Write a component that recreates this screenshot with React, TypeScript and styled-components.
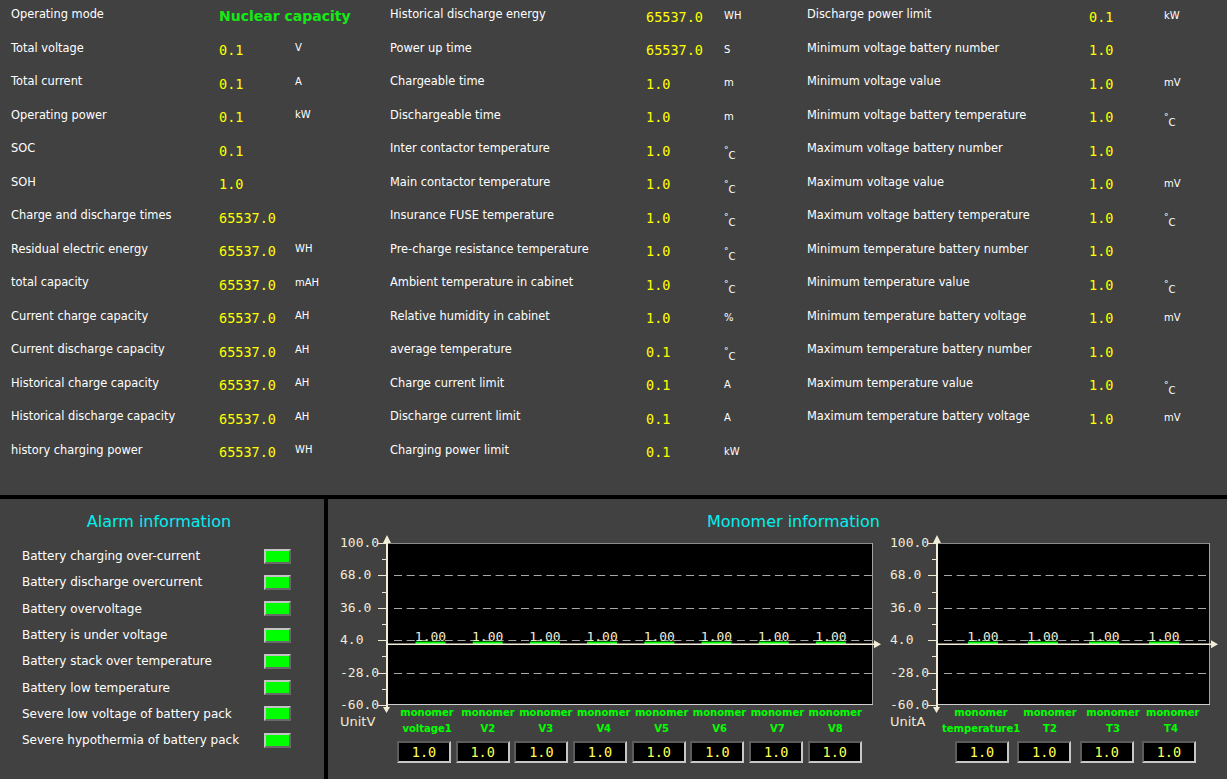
import React from 'react';
import styled, { createGlobalStyle } from 'styled-components';

const GlobalStyle = createGlobalStyle`
  html, body { margin: 0; padding: 0; background: #000; }
  body { font-family: "DejaVu Sans", sans-serif; }
  * { box-sizing: border-box; }
`;

const PANEL = '#414141';
const CREAM = '#f0ecd6';

type Item = { label: string; value: string; unit?: string; accent?: boolean };

const col1: Item[] = [
  { label: 'Operating mode', value: 'Nuclear capacity', accent: true },
  { label: 'Total voltage', value: '0.1', unit: 'V' },
  { label: 'Total current', value: '0.1', unit: 'A' },
  { label: 'Operating power', value: '0.1', unit: 'kW' },
  { label: 'SOC', value: '0.1' },
  { label: 'SOH', value: '1.0' },
  { label: 'Charge and discharge times', value: '65537.0' },
  { label: 'Residual electric energy', value: '65537.0', unit: 'WH' },
  { label: 'total capacity', value: '65537.0', unit: 'mAH' },
  { label: 'Current charge capacity', value: '65537.0', unit: 'AH' },
  { label: 'Current discharge capacity', value: '65537.0', unit: 'AH' },
  { label: 'Historical charge capacity', value: '65537.0', unit: 'AH' },
  { label: 'Historical discharge capacity', value: '65537.0', unit: 'AH' },
  { label: 'history charging power', value: '65537.0', unit: 'WH' },
];

const col2: Item[] = [
  { label: 'Historical discharge energy', value: '65537.0', unit: 'WH' },
  { label: 'Power up time', value: '65537.0', unit: 'S' },
  { label: 'Chargeable time', value: '1.0', unit: 'm' },
  { label: 'Dischargeable time', value: '1.0', unit: 'm' },
  { label: 'Inter contactor temperature', value: '1.0', unit: '°C' },
  { label: 'Main contactor temperature', value: '1.0', unit: '°C' },
  { label: 'Insurance FUSE temperature', value: '1.0', unit: '°C' },
  { label: 'Pre-charge resistance temperature', value: '1.0', unit: '°C' },
  { label: 'Ambient temperature in cabinet', value: '1.0', unit: '°C' },
  { label: 'Relative humidity in cabinet', value: '1.0', unit: '%' },
  { label: 'average temperature', value: '0.1', unit: '°C' },
  { label: 'Charge current limit', value: '0.1', unit: 'A' },
  { label: 'Discharge current limit', value: '0.1', unit: 'A' },
  { label: 'Charging power limit', value: '0.1', unit: 'kW' },
];

const col3: Item[] = [
  { label: 'Discharge power limit', value: '0.1', unit: 'kW' },
  { label: 'Minimum voltage battery number', value: '1.0' },
  { label: 'Minimum voltage value', value: '1.0', unit: 'mV' },
  { label: 'Minimum voltage battery temperature', value: '1.0', unit: '°C' },
  { label: 'Maximum voltage battery number', value: '1.0' },
  { label: 'Maximum voltage value', value: '1.0', unit: 'mV' },
  { label: 'Maximum voltage battery temperature', value: '1.0', unit: '°C' },
  { label: 'Minimum temperature battery number', value: '1.0' },
  { label: 'Minimum temperature value', value: '1.0', unit: '°C' },
  { label: 'Minimum temperature battery voltage', value: '1.0', unit: 'mV' },
  { label: 'Maximum temperature battery number', value: '1.0' },
  { label: 'Maximum temperature value', value: '1.0', unit: '°C' },
  { label: 'Maximum temperature battery voltage', value: '1.0', unit: 'mV' },
];

const alarms = [
  'Battery charging over-current',
  'Battery discharge overcurrent',
  'Battery overvoltage',
  'Battery is under voltage',
  'Battery stack over temperature',
  'Battery low temperature',
  'Severe low voltage of battery pack',
  'Severe hypothermia of battery pack',
];

/* ---------- layout ---------- */

const Screen = styled.div`
  width: 1227px;
  height: 779px;
  display: grid;
  grid-template-rows: 495px 1fr;
  row-gap: 4px;
  background: #000;
  overflow: hidden;
`;

const TopPanel = styled.section`
  background: ${PANEL};
  display: grid;
  grid-template-columns: 390px 417px 1fr;
`;

const Column = styled.div<{ $pad: number }>`
  display: flex;
  flex-direction: column;
  padding-left: ${(p) => p.$pad}px;
`;

const Row = styled.div<{ $template: string }>`
  display: grid;
  grid-template-columns: ${(p) => p.$template};
  height: 33.5px;
  align-items: start;
`;

const Label = styled.span`
  font: 11.4px/14px "DejaVu Sans", sans-serif;
  color: #ffffff;
  padding-top: 7px;
  white-space: nowrap;
`;

const Value = styled.span<{ $accent?: boolean }>`
  white-space: nowrap;
  color: ${(p) => (p.$accent ? '#14ea14' : '#ffff00')};
  font: ${(p) =>
    p.$accent
      ? 'bold 14px/16px "DejaVu Sans", sans-serif'
      : '13.5px/16px "DejaVu Sans Mono", monospace'};
  padding-top: ${(p) => (p.$accent ? 8 : 8.5)}px;
`;

const UnitText = styled.span<{ $top: number }>`
  font: 10px/12px "DejaVu Sans", sans-serif;
  color: #ffffff;
  padding-top: ${(p) => p.$top}px;
  white-space: nowrap;
`;

const Deg = styled.span`
  vertical-align: 2px;
  font-size: 9px;
`;

const DegC = styled.span`
  vertical-align: -4px;
`;

const Bottom = styled.div`
  display: grid;
  grid-template-columns: 324px 1fr;
  column-gap: 4px;
`;

const Panel = styled.section<{ $padLeft: number }>`
  background: ${PANEL};
  padding: 13px 0 0 ${(p) => p.$padLeft}px;
  display: flex;
  flex-direction: column;
`;

const PanelTitle = styled.h2<{ $shift: number }>`
  margin: 0;
  font: 16px/20px "DejaVu Sans", sans-serif;
  font-weight: normal;
  color: #00f0f0;
  text-align: center;
  padding-left: ${(p) => Math.max(p.$shift, 0)}px;
  padding-right: ${(p) => Math.max(-p.$shift, 0)}px;
`;

const AlarmList = styled.ul`
  list-style: none;
  margin: 11px 0 0;
  padding: 0 0 0 22px;
`;

const AlarmRow = styled.li`
  display: grid;
  grid-template-columns: 242px 27px;
  height: 26.3px;
  align-items: center;
`;

const AlarmLabel = styled.span`
  font: 12px/14px "DejaVu Sans", sans-serif;
  color: #ffffff;
  white-space: nowrap;
`;

const Led = styled.span`
  display: block;
  width: 27px;
  height: 15px;
  background: #00ff00;
  border: 2px solid;
  border-color: #c4c4c4 #6a6a6a #6a6a6a #c4c4c4;
`;

const ChartsRow = styled.div`
  display: flex;
  margin-top: 1px;
`;

const ChartGroup = styled.div<{ $w: number }>`
  width: ${(p) => p.$w}px;
  display: flex;
  flex-direction: column;
`;

const ChartSvg = styled.svg`
  display: block;
  overflow: visible;
`;

const LabelGrid = styled.div<{ $template: string }>`
  display: grid;
  grid-template-columns: ${(p) => p.$template};
  height: 32px;
  align-items: center;
`;

const UnitCaption = styled.span<{ $pad: number }>`
  font: 13px/16px "DejaVu Sans", sans-serif;
  color: ${CREAM};
  padding-left: ${(p) => p.$pad}px;
  padding-top: 2px;
`;

const ChannelName = styled.span`
  font: bold 10px/16px "DejaVu Sans", sans-serif;
  color: #00ff00;
  text-align: center;
  white-space: nowrap;
`;

const BoxRow = styled.div<{ $lead: number; $gap: number }>`
  display: flex;
  gap: ${(p) => p.$gap}px;
  padding-left: ${(p) => p.$lead}px;
  margin-top: 4px;
`;

const ValueBox = styled.div`
  width: 54px;
  height: 22px;
  flex: none;
  background: #000;
  border: 2px solid;
  border-color: #5c5c5c #c8c8c8 #c8c8c8 #5c5c5c;
  color: #ffff55;
  font: 13.5px/18px "DejaVu Sans Mono", monospace;
  display: flex;
  align-items: center;
  justify-content: center;
`;

/* ---------- chart drawing ---------- */

const TICKS = [100, 68, 36, 4, -28, -60];
const MINOR = [84, 52, 20, -12, -44];
const DASHED = [68, 36, 4, -28];
const yOf = (v: number) => 10 + ((100 - v) * 162) / 160;

type ChartProps = {
  width: number;
  labelX: number;
  axisX: number;
  plotRight: number;
  dashStart: number;
  bars: number[];
};

function Chart({ width, labelX, axisX, plotRight, dashStart, bars }: ChartProps) {
  const zero = yOf(0);
  return (
    <ChartSvg width={width} height={172} viewBox={`0 0 ${width} 172`}>
      <rect x={axisX + 1} y={10} width={plotRight - axisX - 1} height={162} fill="#000" />
      <line x1={axisX} y1={10.5} x2={plotRight} y2={10.5} stroke="#8c8c8c" />
      <line x1={plotRight - 0.5} y1={10} x2={plotRight - 0.5} y2={172} stroke="#a4a4a4" />
      <line x1={axisX} y1={171.5} x2={plotRight} y2={171.5} stroke="#cfcfcf" />
      {DASHED.map((v) => (
        <line
          key={v}
          x1={dashStart}
          y1={Math.round(yOf(v)) + 0.5}
          x2={plotRight - 1}
          y2={Math.round(yOf(v)) + 0.5}
          stroke="#a8a8a8"
          strokeDasharray="8 4.7"
        />
      ))}
      {TICKS.map((v) => (
        <g key={v}>
          <line x1={axisX - 9} y1={Math.round(yOf(v)) + 0.5} x2={axisX} y2={Math.round(yOf(v)) + 0.5} stroke={CREAM} />
          <text
            x={labelX}
            y={yOf(v) + 4}
            fill={CREAM}
            fontFamily='"DejaVu Sans Mono", monospace'
            fontSize={13}
          >
            {v.toFixed(1)}
          </text>
        </g>
      ))}
      {MINOR.map((v) => (
        <line key={v} x1={axisX - 5} y1={Math.round(yOf(v)) + 0.5} x2={axisX} y2={Math.round(yOf(v)) + 0.5} stroke={CREAM} />
      ))}
      {bars.map((c, i) => (
        <g key={i}>
          <text
            x={c}
            y={108}
            fill={CREAM}
            textAnchor="middle"
            fontFamily='"DejaVu Sans Mono", monospace'
            fontSize={13}
          >
            1.00
          </text>
          <rect x={c - 15} y={108.6} width={30} height={2.4} fill="#00ff00" />
        </g>
      ))}
      <line x1={axisX} y1={zero} x2={plotRight + 1} y2={zero} stroke={CREAM} strokeWidth={1.5} />
      <polygon
        points={`${plotRight + 1},${zero - 4} ${plotRight + 1},${zero + 4} ${plotRight + 8},${zero}`}
        fill={CREAM}
      />
      <line x1={axisX} y1={8} x2={axisX} y2={174} stroke={CREAM} strokeWidth={2} />
      <polygon points={`${axisX},2 ${axisX - 4},10 ${axisX + 4},10`} fill={CREAM} />
      <polygon points={`${axisX - 4},174 ${axisX + 3},174 ${axisX - 0.5},180`} fill={CREAM} />
    </ChartSvg>
  );
}

/* ---------- pieces ---------- */

function UnitCell({ unit, top }: { unit?: string; top: number }) {
  if (!unit) return <UnitText $top={top} />;
  if (unit === '°C')
    return (
      <UnitText $top={top}>
        <Deg>°</Deg>
        <DegC>C</DegC>
      </UnitText>
    );
  return <UnitText $top={top}>{unit}</UnitText>;
}

function DataColumn({
  items,
  pad,
  template,
  unitTop,
}: {
  items: Item[];
  pad: number;
  template: string;
  unitTop: number;
}) {
  return (
    <Column $pad={pad}>
      {items.map((it) => (
        <Row key={it.label} $template={template}>
          <Label>{it.label}</Label>
          <Value $accent={it.accent}>{it.value}</Value>
          <UnitCell unit={it.unit} top={unitTop} />
        </Row>
      ))}
    </Column>
  );
}

const voltNames = ['voltage1', 'V2', 'V3', 'V4', 'V5', 'V6', 'V7', 'V8'];
const tempNames = ['temperature1', 'T2', 'T3', 'T4'];

export default function App() {
  return (
    <>
      <GlobalStyle />
      <Screen>
        <TopPanel>
          <DataColumn items={col1} pad={11} template="208px 76px 1fr" unitTop={8.5} />
          <DataColumn items={col2} pad={0} template="256px 78px 1fr" unitTop={10.2} />
          <DataColumn items={col3} pad={0} template="282px 75px 1fr" unitTop={10.2} />
        </TopPanel>
        <Bottom>
          <Panel $padLeft={0}>
            <PanelTitle $shift={-6}>Alarm information</PanelTitle>
            <AlarmList>
              {alarms.map((a) => (
                <AlarmRow key={a}>
                  <AlarmLabel>{a}</AlarmLabel>
                  <Led />
                </AlarmRow>
              ))}
            </AlarmList>
          </Panel>
          <Panel $padLeft={2}>
            <PanelTitle $shift={30}>Monomer information</PanelTitle>
            <ChartsRow>
              <ChartGroup $w={552}>
                <Chart
                  width={552}
                  labelX={10}
                  axisX={57}
                  plotRight={543}
                  dashStart={64}
                  bars={[100.5, 157.7, 214.9, 272.1, 329.3, 386.5, 443.7, 500.9]}
                />
                <LabelGrid $template="65px 64px repeat(7, 57.9px)">
                  <UnitCaption $pad={10}>UnitV</UnitCaption>
                  {voltNames.map((n) => (
                    <ChannelName key={n}>
                      monomer
                      <br />
                      {n}
                    </ChannelName>
                  ))}
                </LabelGrid>
                <BoxRow $lead={67} $gap={4.7}>
                  {voltNames.map((n) => (
                    <ValueBox key={n}>1.0</ValueBox>
                  ))}
                </BoxRow>
              </ChartGroup>
              <ChartGroup $w={345}>
                <Chart
                  width={345}
                  labelX={8}
                  axisX={55}
                  plotRight={328}
                  dashStart={62}
                  bars={[101, 161, 222, 282]}
                />
                <LabelGrid $template="60px 78px 60px 66px 50px">
                  <UnitCaption $pad={8}>UnitA</UnitCaption>
                  {tempNames.map((n) => (
                    <ChannelName key={n}>
                      monomer
                      <br />
                      {n}
                    </ChannelName>
                  ))}
                </LabelGrid>
                <BoxRow $lead={73} $gap={8.3}>
                  {tempNames.map((n) => (
                    <ValueBox key={n}>1.0</ValueBox>
                  ))}
                </BoxRow>
              </ChartGroup>
            </ChartsRow>
          </Panel>
        </Bottom>
      </Screen>
    </>
  );
}
